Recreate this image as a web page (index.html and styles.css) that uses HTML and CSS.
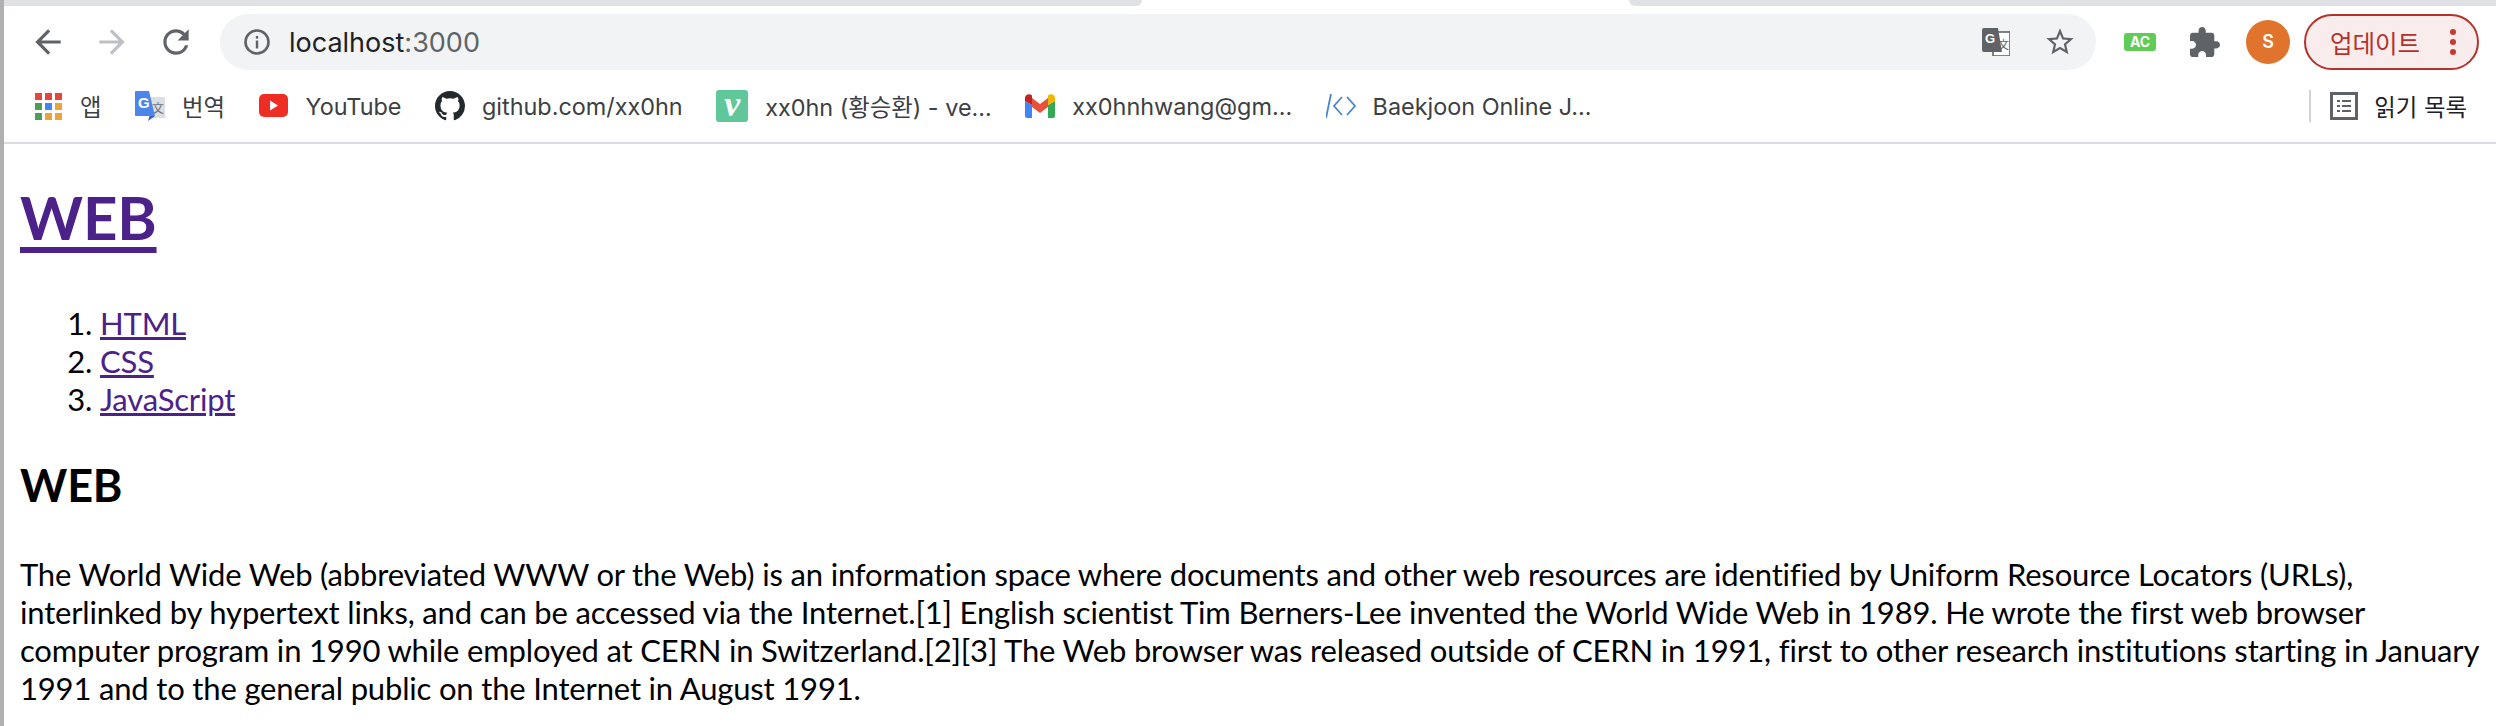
FILE: index.html
```html
<!DOCTYPE html>
<html lang="ko">
<head>
    <meta charset="UTF-8">
    <title>WEB</title>
    <link rel="stylesheet" href="styles.css">
</head>
<body>
    <!-- Browser chrome -->
    <div class="tabstrip">
        <div class="tab-left"></div>
        <div class="tab-active"></div>
        <div class="tab-right"></div>
    </div>

    <div class="toolbar">
        <svg class="nav-icon" viewBox="0 0 24 24"><path d="M20 11H7.83l5.59-5.59L12 4l-8 8 8 8 1.41-1.41L7.83 13H20v-2z"/></svg>
        <svg class="nav-icon disabled" viewBox="0 0 24 24"><path d="M4 11h12.17l-5.59-5.59L12 4l8 8-8 8-1.41-1.41L16.17 13H4v-2z"/></svg>
        <svg class="nav-icon" viewBox="0 0 24 24"><path d="M17.65 6.35A7.958 7.958 0 0 0 12 4c-4.42 0-7.99 3.58-7.99 8s3.57 8 7.99 8c3.73 0 6.84-2.55 7.73-6h-2.08A5.99 5.99 0 0 1 12 18c-3.31 0-6-2.69-6-6s2.69-6 6-6c1.66 0 3.14.69 4.22 1.78L13 11h7V4l-2.35 2.35z"/></svg>

        <div class="omnibox">
            <svg class="info-icon" viewBox="0 0 28 28">
                <circle cx="14" cy="14" r="11.5" fill="none" stroke="#5f6368" stroke-width="2.6"/>
                <rect x="12.8" y="12.5" width="2.4" height="8" fill="#5f6368"/>
                <rect x="12.8" y="8" width="2.4" height="2.6" fill="#5f6368"/>
            </svg>
            <span class="url">localhost<span class="port">:3000</span></span>
            <svg class="translate-icon" viewBox="0 0 28 28">
                <rect x="11" y="4" width="17" height="24" fill="#fff" stroke="#5f6368" stroke-width="1.6"/>
                <path d="M2 0h14l4 24H2a2 2 0 0 1-2-2V2a2 2 0 0 1 2-2z" fill="#5f6368"/>
                <text x="3" y="15" class="translate-g">G</text>
                <text x="16" y="21" class="translate-a">文</text>
            </svg>
            <svg class="star-icon" viewBox="1 1 22 22"><path d="M22 9.24l-7.19-.62L12 2 9.19 8.63 2 9.24l5.46 4.73L5.82 21 12 17.27 18.18 21l-1.63-7.03L22 9.24zM12 15.4l-3.76 2.27 1-4.28-3.32-2.88 4.38-.38L12 6.1l1.71 4.04 4.38.38-3.32 2.88 1 4.28L12 15.4z"/></svg>
        </div>

        <div class="ac-badge">AC</div>
        <svg class="puzzle-icon" viewBox="2 1 21 21"><path d="M20.5 11H19V7c0-1.1-.9-2-2-2h-4V3.500C13 2.120 11.880 1 10.500 1S8 2.120 8 3.500V5H4c-1.100 0-1.990.9-1.990 2v3.800H3.500c1.490 0 2.700 1.210 2.700 2.700s-1.210 2.700-2.700 2.700H2V20c0 1.100.9 2 2 2h3.800v-1.500c0-1.490 1.210-2.700 2.700-2.700 1.490 0 2.700 1.210 2.700 2.700V22H17c1.100 0 2-.9 2-2v-4h1.500c1.380 0 2.500-1.120 2.500-2.500S21.880 11 20.500 11z"/></svg>
        <div class="avatar">S</div>
        <div class="update-btn">
            <span>업데이트</span>
            <div class="dots"><i></i><i></i><i></i></div>
        </div>
    </div>

    <div class="bookmarks">
        <a class="bm">
            <div class="apps-icon">
                <i class="r"></i><i class="r"></i><i class="r"></i>
                <i class="g"></i><i class="b"></i><i class="y"></i>
                <i class="g"></i><i class="y"></i><i class="y"></i>
            </div>
            <span>앱</span>
        </a>
        <a class="bm">
            <svg class="bm-icon" viewBox="0 0 30 30">
                <rect x="14" y="6" width="16" height="21" rx="1" fill="#dcdedf"/>
                <text x="17" y="22" class="gt-a">文</text>
                <path d="M1 0h13l6 25H1a1 1 0 0 1-1-1V1a1 1 0 0 1 1-1z" fill="#4d86ea"/>
                <path d="M20 25l-7 5 1.600-5z" fill="#3c5ec0"/>
                <text x="3" y="17" class="gt-g">G</text>
            </svg>
            <span>번역</span>
        </a>
        <a class="bm">
            <svg class="bm-icon" viewBox="0 0 30 24">
                <rect x="0" y="0" width="29" height="23" rx="5" fill="#ee2e24"/>
                <path d="M11 6.500l8 5-8 5z" fill="#fff"/>
            </svg>
            <span>YouTube</span>
        </a>
        <a class="bm">
            <svg class="bm-icon" viewBox="0 0 16 16"><path fill="#24292e" d="M8 0C3.580 0 0 3.580 0 8c0 3.540 2.290 6.530 5.470 7.590.4.070.55-.17.55-.38 0-.19-.01-.82-.01-1.490-2.010.37-2.530-.49-2.690-.94-.09-.23-.48-.94-.82-1.130-.28-.15-.68-.52-.01-.53.63-.01 1.080.58 1.230.82.720 1.210 1.870.87 2.330.66.070-.52.280-.87.510-1.070-1.780-.2-3.640-.89-3.640-3.950 0-.87.310-1.590.820-2.150-.08-.2-.36-1.020.080-2.120 0 0 .67-.21 2.200.82.640-.18 1.320-.27 2-.27.680 0 1.360.09 2 .27 1.530-1.040 2.200-.82 2.200-.82.440 1.100.160 1.920.080 2.120.510.560.820 1.270.820 2.150 0 3.070-1.870 3.750-3.650 3.950.290.250.540.730.540 1.480 0 1.070-.01 1.930-.01 2.200 0 .21.150.46.550.38A8.013 8.013 0 0 0 16 8c0-4.420-3.580-8-8-8z"/></svg>
            <span>github.com/xx0hn</span>
        </a>
        <a class="bm">
            <div class="velog-icon">v</div>
            <span>xx0hn (황승환) - ve…</span>
        </a>
        <a class="bm">
            <svg class="bm-icon" viewBox="0 0 30 24">
                <path d="M0 7v15a2 2 0 0 0 2 2h5V11z" fill="#4285f4"/>
                <path d="M30 7v15a2 2 0 0 1-2 2h-5V11z" fill="#34a853"/>
                <path d="M7 4v9l8 6 8-6V4l-8 6z" fill="#e5533d"/>
                <path d="M0 7V4c0-3 4-5 7-2.500V11z" fill="#c5221f"/>
                <path d="M30 7V4c0-3-4-5-7-2.500V11z" fill="#f4b400"/>
            </svg>
            <span>xx0hnhwang@gm…</span>
        </a>
        <a class="bm">
            <svg class="bm-icon code-icon" viewBox="0 0 30 24">
                <path d="M0 24L5 0"/>
                <path d="M16 3L8 12l8 9"/>
                <path d="M21 3l8 9-8 9"/>
            </svg>
            <span>Baekjoon Online J…</span>
        </a>
        <div class="reading">
            <svg class="reading-icon" viewBox="0 0 28 28">
                <rect x="1.500" y="1.500" width="25" height="25" fill="none" stroke="#5f6368" stroke-width="3"/>
                <path d="M7 8h3v2H7zM12 8h9v2h-9zM7 13h3v2H7zM12 13h9v2h-9zM7 18h3v2H7zM12 18h9v2h-9z" fill="#5f6368"/>
            </svg>
            <span>읽기 목록</span>
        </div>
    </div>

    <!-- Page -->
    <div class="content">
        <h1><a href="#">WEB</a></h1>
        <ol>
            <li><a href="#">HTML</a></li>
            <li><a href="#">CSS</a></li>
            <li><a href="#">JavaScript</a></li>
        </ol>
        <h2>WEB</h2>
        <p>The World Wide Web (abbreviated WWW or the Web) is an information space where documents and other web resources are identified by Uniform Resource Locators (URLs), interlinked by hypertext links, and can be accessed via the Internet.[1] English scientist Tim Berners-Lee invented the World Wide Web in 1989. He wrote the first web browser computer program in 1990 while employed at CERN in Switzerland.[2][3] The Web browser was released outside of CERN in 1991, first to other research institutions starting in January 1991 and to the general public on the Internet in August 1991.</p>
    </div>
</body>
</html>
```

FILE: styles.css
```css
html, body {
    margin: 0;
    height: 100%;
    overflow: hidden;
}
body {
    border-left: 4px solid #b0b0b0;
    background: #fff;
    font-family: Inter, "Noto Sans CJK KR", sans-serif;
}

/* tabs */
.tabstrip {
    display: flex;
    height: 6px;
}
.tab-left {
    width: 1138px;
    background: #dfe1e5;
    border-bottom-right-radius: 10px;
}
.tab-active {
    width: 487px;
}
.tab-right {
    flex: 1;
    background: #dfe1e5;
    border-bottom-left-radius: 10px;
}

/* toolbar */
.toolbar {
    display: flex;
    align-items: center;
    height: 64px;
    padding-top: 8px;
    box-sizing: border-box;
}
.nav-icon {
    width: 38px;
    height: 38px;
    margin-left: 26px;
    fill: #5f6368;
    flex: none;
}
.nav-icon:first-child {
    margin-left: 25px;
}
.nav-icon.disabled {
    fill: #bdc1c6;
}
.omnibox {
    display: flex;
    align-items: center;
    width: 1876px;
    height: 56px;
    margin-left: 25px;
    border-radius: 28px;
    background: #f1f3f4;
    flex: none;
}
.info-icon {
    width: 28px;
    height: 28px;
    margin-left: 23px;
}
.url {
    margin-left: 18px;
    font-size: 27px;
    color: #202124;
}
.port {
    color: #5f6368;
}
.translate-icon {
    width: 28px;
    height: 28px;
    margin-left: auto;
}
.translate-g {
    font: bold 13px "Liberation Sans", sans-serif;
    fill: #fff;
}
.translate-a {
    font: 11px "Noto Sans CJK KR", sans-serif;
    fill: #5f6368;
}
.star-icon {
    width: 30px;
    height: 30px;
    margin: 0 21px 0 35px;
    fill: #5f6368;
}
.ac-badge {
    width: 32px;
    height: 18px;
    margin-left: 28px;
    border-radius: 3px;
    background: #5fcd55;
    color: #fff;
    font-size: 14px;
    font-weight: bold;
    line-height: 18px;
    text-align: center;
    flex: none;
}
.puzzle-icon {
    width: 30px;
    height: 30px;
    margin-left: 34px;
    fill: #5f6368;
    flex: none;
}
.avatar {
    width: 44px;
    height: 44px;
    margin-left: 26px;
    border-radius: 50%;
    background: #e0742c;
    color: #fff;
    font-size: 18px;
    font-weight: 600;
    line-height: 44px;
    text-align: center;
    flex: none;
}
.update-btn {
    display: flex;
    align-items: center;
    width: 175px;
    height: 56px;
    margin-left: 14px;
    padding-left: 24px;
    box-sizing: border-box;
    border: 2px solid #b5322a;
    border-radius: 28px;
    background: #f9ecec;
    color: #b5322a;
    font-size: 24.500px;
    flex: none;
}
.dots {
    display: flex;
    flex-direction: column;
    gap: 4px;
    margin-left: 30px;
}
.dots i {
    width: 6px;
    height: 6px;
    border-radius: 50%;
    background: #c5392f;
}

/* bookmarks */
.bookmarks {
    display: flex;
    align-items: center;
    gap: 33.500px;
    height: 74px;
    padding-left: 31px;
    border-bottom: 2px solid #dcdce2;
    box-sizing: border-box;
    color: #3c4043;
    font-size: 23.400px;
}
.bm {
    display: flex;
    align-items: center;
    gap: 17px;
    white-space: nowrap;
}
.bm-icon {
    width: 30px;
    height: 30px;
    flex: none;
}
.apps-icon {
    display: grid;
    grid-template-columns: repeat(3, 7px);
    gap: 3px;
    width: 28px;
}
.apps-icon i {
    height: 7px;
}
.apps-icon .r { background: #e2483d; }
.apps-icon .g { background: #4f9d5b; }
.apps-icon .b { background: #4285f4; }
.apps-icon .y { background: #e8a53a; }
.gt-g {
    font: bold 15px "Liberation Sans", sans-serif;
    fill: #fff;
}
.gt-a {
    font: 12px "Noto Sans CJK KR", sans-serif;
    fill: #6b7280;
}
.velog-icon {
    width: 32px;
    height: 32px;
    border-radius: 3px;
    background: #5fc79a;
    color: #fff;
    font: italic bold 36px/28px "Liberation Serif", serif;
    text-align: center;
}
.code-icon path {
    fill: none;
    stroke: #4a86c8;
    stroke-width: 1.800;
}
.reading {
    display: flex;
    align-items: center;
    gap: 16px;
    height: 32px;
    margin-left: auto;
    margin-right: 29px;
    padding-left: 19px;
    border-left: 2px solid #d0d2d5;
    color: #202124;
    white-space: nowrap;
}
.reading-icon {
    width: 28px;
    height: 28px;
}

/* page */
.content {
    padding: 0 14px 0 16px;
    color: #000;
    font-family: Lato, "Noto Sans CJK KR", sans-serif;
    font-size: 31px;
    letter-spacing: -0.17px;
    line-height: 38px;
}
.content a {
    color: #4c2189;
}
h1 {
    margin: 37px 0 0;
    font-size: 60px;
    line-height: 73px;
}
h1 a {
    text-decoration-thickness: 6px;
    text-underline-offset: 7px;
}
ol {
    margin: 50px 0 0;
    padding-left: 80px;
}
h2 {
    margin: 40px 0 0;
    font-size: 45px;
    line-height: 55px;
}
p {
    margin: 42px 0 0;
}
```
